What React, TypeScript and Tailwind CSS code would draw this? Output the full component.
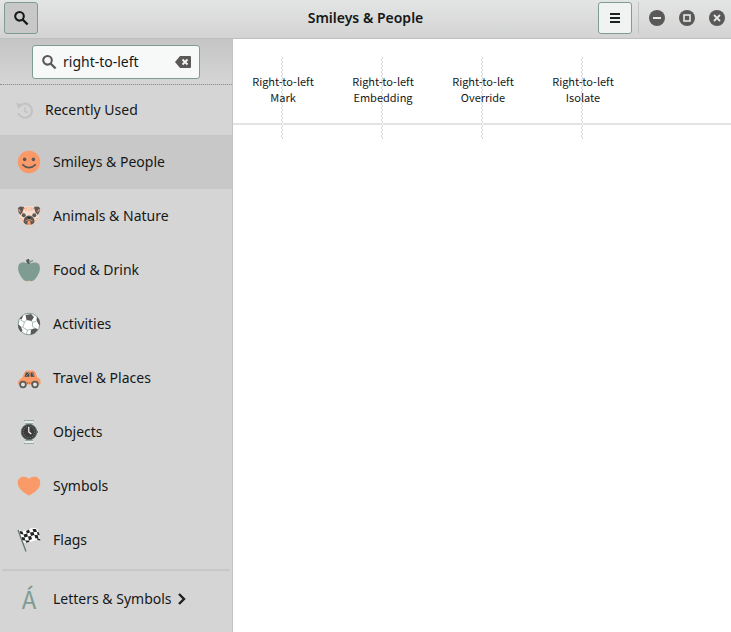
import type { ReactNode } from "react";

function SearchIcon({ className }: { className: string }) {
  return (
    <svg viewBox="0 0 16 16" className={className} fill="none" stroke="currentColor" aria-hidden="true">
      <circle cx="6.5" cy="6.3" r="4.3" strokeWidth="2.1" />
      <path d="M9.6 9.5l5 5" strokeWidth="2.4" />
    </svg>
  );
}

const icons: Record<string, ReactNode> = {
  smiley: (
    <>
      <circle cx="12" cy="12" r="11.2" fill="#fb9a69" />
      <ellipse cx="7.6" cy="9.3" rx="1.7" ry="1.9" fill="#5b5957" />
      <ellipse cx="16.4" cy="9.3" rx="1.7" ry="1.9" fill="#5b5957" />
      <path d="M5.2 14.3q6.8 6.600 13.600 0" stroke="#5b5957" strokeWidth="1.7" fill="none" />
    </>
  ),
  dog: (
    <>
      <path d="M4 3.500q8-3 16 0l2 8q0 8-10 10.500Q2 19.500 2 11.500z" fill="#f6ddcf" />
      <path
        d="M7 4l3 3M17 4l-3 3M12 3v5M3.500 14l3 4.500M20.500 14l-3 4.500M9 3.500l1.500 2M15 3.500l-1.500 2M5 9l2-1M19 9l-2-1"
        stroke="#fb9a69"
        strokeWidth="1.1"
        strokeDasharray="1.400 .8"
      />
      <path d="M7 3Q2 1.500 .8 4.500q.2 4 2.400 6.500Q6 8.500 7 3zM17 3q5-1.500 6.200 1.500-.2 4-2.400 6.500Q18 8.500 17 3z" fill="#5b5957" />
      <path d="M1.500 5l2 3M22.500 5l-2 3" stroke="#fb9a69" strokeWidth="1.200" />
      <circle cx="6.700" cy="11.300" r="2" fill="#5b5957" />
      <circle cx="17.300" cy="11.300" r="2" fill="#5b5957" />
      <path d="M12 11.500q3.500 0 5 3.500 1.500 4-2 5.500H9Q5.500 19 7 15 8.500 11.500 12 11.500z" fill="#5b5957" />
      <path d="M8.500 17q3.500-3 7 0" stroke="#d98d69" fill="none" />
      <path d="M10 13h4l-2 2z" fill="#1d2021" />
      <ellipse cx="12" cy="19" rx="1.600" ry="2.400" fill="#fb9a69" />
    </>
  ),
  apple: (
    <>
      <path d="M12 6Q5 2.300 2 6.300C-1 12 4 20 8 22.800q2 .8 4 0 2 .8 4 0C20 20 25 12 22 6.300 19 2.300 12 6 12 6z" fill="#7f9c93" />
      <path d="M10.800 6L8.800 2.500q1.500-2.300 3.500-1.300L12.800 6z" fill="#5b5957" />
      <path d="M12.500 5q1-2 3.500-2.500" stroke="#7f9c93" strokeWidth="1.400" fill="none" />
      <path d="M22 5.500v1.500M11 22.800h2" stroke="#fb9a69" strokeWidth=".8" />
    </>
  ),
  ball: (
    <>
      <circle cx="12" cy="12" r="10.800" fill="#fff" stroke="#7f9c93" strokeWidth="1" />
      <path
        d="M8.500 3l5.500-1 3 3-2.500 4-5-1zM14 17.500l4.500-1.500 2.500 1.500-3.500 4-4 1.200zM1 12.500l2.500 1.500 2 4.500-1.500 1.500Q1 17 1 12.500zM20 4.500q3.500 4 3 9l-2-2-1.500-3.500zM2.500 7l2.500-3 1 .5-1.500 3z"
        fill="#5b5957"
      />
      <path
        d="M9.500 8L7.500 10l-4-2M7.500 10l-1.500 5-2 .5M6 15.500l4.500 2.500 3.500-.5M14.500 9l1 1.500 4-1.500M15.500 10.500l0 4 3 2M10.500 18l-1 4"
        stroke="#a3b8b1"
        strokeWidth=".9"
        fill="none"
      />
    </>
  ),
  car: (
    <>
      <path d="M1 16q1-3 4-4l2-4.500Q8 4.500 10 4.500h6q1.800 0 2.700 2.500l1.500 4.500q3.300 1 3.300 3.500v3.500H1z" fill="#fb9a69" />
      <path d="M7.500 10.700L9 6.500h3.400v4.200zM13.600 6.500h2.700l1.300 4.200h-4z" fill="#45484a" />
      <path d="M9 10l3-3M15 7l2 3" stroke="#a6aaa8" strokeWidth=".7" />
      <path d="M10 17h5" stroke="#5b5957" strokeDasharray="1 1" />
      {[6, 18].map((x) => (
        <g key={x}>
          <circle cx={x} cy="18.500" r="3.700" fill="#5b5957" />
          <circle cx={x} cy="18.500" r="2" fill="#dfe3e2" />
        </g>
      ))}
    </>
  ),
  watch: (
    <>
      <path d="M7 .8h10M8 3.200h8M8 20.800h8M7 23.200h10" stroke="#7f9c93" strokeWidth="1" />
      <path d="M7.500 2h9M7.500 22h9" stroke="#f3f6f5" strokeWidth="1.500" />
      <circle cx="12" cy="12" r="7.700" fill="#3c3c3c" stroke="#5b6b66" strokeWidth="1" />
      <circle cx="12" cy="12" r="5.700" fill="none" stroke="#858987" strokeDasharray="1 1.300" />
      <path d="M11.800 7v5l2.500 2" stroke="#fff" strokeWidth="1.200" fill="none" />
      <path d="M20.300 11v2" stroke="#5b5957" />
    </>
  ),
  heart: (
    <path d="M12 21.500C8 19.500.5 15 .7 8.500.8 2 9 1 12 5 15 1 23.200 2 23.300 8.500 23.500 15 16 19.500 12 21.500z" fill="#fb9a69" />
  ),
  flag: (
    <>
      <path d="M1.500 2q5 2 10-.5t9-.500l3 11.500q-4-1.500-9 1t-9 .5z" fill="#fff" />
      <path
        d="M2.500 3l3 .5 1 3-3-.5zM9 3l3-1.500 1 3-3 1zM15.500 1h3.500l1 3h-3.500zM6.500 6.500l3.500-1 1 3-3.500 1zM13 4.500L16.500 4l1 3-3.500 1zM20 4l1.800.3.8 3-2-.3zM4.500 9l3 .5 1 3-3.200-.3zM11 8.500L14 8l1 3-3 1.500zM17.500 7l3.100 0 1 3.500-3.300-.3zM8.500 12.500L12 12.300l.4 1.600-3.400.8zM20 10.500l3 .5.500 1.500-3-.5z"
        fill="#202223"
      />
      <path d="M1 2l8 21.500" stroke="#60746d" strokeWidth="1.300" />
    </>
  ),
};

const categories = [
  ["Smileys & People", "smiley"],
  ["Animals & Nature", "dog"],
  ["Food & Drink", "apple"],
  ["Activities", "ball"],
  ["Travel & Places", "car"],
  ["Objects", "watch"],
  ["Symbols", "heart"],
  ["Flags", "flag"],
];

const results = [
  ["Right-to-left", "Mark"],
  ["Right-to-left", "Embedding"],
  ["Right-to-left", "Override"],
  ["Right-to-left", "Isolate"],
];

const windowControls = [
  { label: "Minimize", shape: <path d="M4 8h8" strokeWidth="2" /> },
  { label: "Maximize", shape: <rect x="5" y="5" width="6" height="6" strokeWidth="1.600" /> },
  { label: "Close", shape: <path d="M5 5l6 6M11 5l-6 6" strokeWidth="1.800" /> },
];

export default function App() {
  return (
    <div className="flex min-h-screen flex-col bg-white font-['Noto_Sans',sans-serif] text-sm text-[#151818]">
      <header className="grid h-[39px] grid-cols-[1fr_auto_1fr] items-start border-b border-[#bcc1bf] bg-linear-to-b from-[#e3e5e4] to-[#d3d3d3]">
        <div className="pt-0.5 pl-1">
          <button
            type="button"
            aria-label="Search"
            className="flex h-8 w-[34px] items-center justify-center rounded-[3px] border border-[#7f9c93] bg-[#c8c8c8]"
          >
            <SearchIcon className="size-4" />
          </button>
        </div>
        <h1 className="pt-2 font-semibold">Smileys &amp; People</h1>
        <div className="flex items-center justify-end pt-0.5 pr-1.5">
          <button
            type="button"
            aria-label="Menu"
            className="flex h-8 w-[34px] items-center justify-center rounded-[3px] border border-[#7f9c93] bg-[#f1f3f2]"
          >
            <svg viewBox="0 0 16 16" className="size-4" aria-hidden="true">
              <path d="M3 4h10M3 8h10M3 12h10" stroke="#1d2021" strokeWidth="2" />
            </svg>
          </button>
          <div className="ml-1.5 h-8 w-px bg-[#c4c4c4]" />
          <div className="ml-2.5 flex gap-3.5">
            {windowControls.map(({ label, shape }) => (
              <button key={label} type="button" aria-label={label} className="rounded-full">
                <svg viewBox="0 0 16 16" className="size-4" fill="none" stroke="#e6e8e7" aria-hidden="true">
                  <circle cx="8" cy="8" r="8" fill="#5b5957" stroke="none" />
                  {shape}
                </svg>
              </button>
            ))}
          </div>
        </div>
      </header>

      <div className="flex flex-1">
        <aside className="w-[233px] shrink-0 border-r border-[#c3c3c3] bg-[#d5d5d5]">
          <div className="flex h-[46px] justify-center border-b border-dotted border-[#7f9c93] bg-linear-to-b from-[#c5c5c5] to-[#d5d5d5] pt-1.5">
            <div className="flex h-[34px] w-[168px] items-center rounded-[3px] border border-[#7f9c93] bg-[#f7f8f8] px-2">
              <label htmlFor="character-search" aria-label="Search characters" className="shrink-0">
                <SearchIcon className="size-4 text-[#5b5957]" />
              </label>
              <input
                id="character-search"
                type="text"
                defaultValue="right-to-left"
                className="ml-1.5 w-full min-w-0 bg-transparent outline-none"
              />
              <button type="button" aria-label="Clear search" className="shrink-0">
                <svg viewBox="0 0 16 16" className="size-4" aria-hidden="true">
                  <path d="M5 2h10q1 0 1 1v10q0 1-1 1H5L0 8z" fill="#5b5957" />
                  <path d="M7.500 5.500l5 5M12.500 5.500l-5 5" stroke="#f7f8f8" strokeWidth="1.800" />
                </svg>
              </button>
            </div>
          </div>

          <nav>
            <button type="button" className="flex h-[50px] w-full items-center gap-3 pl-4">
              <svg viewBox="0 0 17 17" className="size-[17px]" fill="none" stroke="#c3c3c3" aria-hidden="true">
                <path d="M3 5a7 7 0 1 1-.7 6" strokeWidth="2.200" />
                <path d="M0 1l6 1-3.500 5z" fill="#c3c3c3" stroke="none" />
                <path d="M9 5v4.500l3 1" strokeWidth="1.600" />
              </svg>
              Recently Used
            </button>
            {categories.map(([label, icon], index) => (
              <button
                key={label}
                type="button"
                className={
                  index === 0
                    ? "flex h-[54px] w-full items-center gap-3 bg-[#c8c8c8] pl-[17px]"
                    : "flex h-[54px] w-full items-center gap-3 pl-[17px]"
                }
              >
                <svg viewBox="0 0 24 24" className="size-6" aria-hidden="true">
                  {icons[icon]}
                </svg>
                {label}
              </button>
            ))}
            <hr className="mx-0.5 mt-0.5 border-t-2 border-[#c8c8c8]" />
            <button type="button" className="flex h-14 w-full items-center gap-3 pl-[17px]">
              <span className="w-6 text-center font-['Noto_Sans_CJK_SC',sans-serif] text-2xl text-[#7f9c93]">Á</span>
              <span className="flex items-center gap-1">
                Letters &amp; Symbols
                <svg viewBox="0 0 12 16" className="h-4 w-3" fill="none" aria-hidden="true">
                  <path d="M3 3l5 5-5 5" stroke="#1d2021" strokeWidth="2.400" />
                </svg>
              </span>
            </button>
          </nav>
        </aside>

        <main className="flex-1">
          <ul className="flex h-[86px] border-b-2 border-[#e3e3e3] font-['Noto_Sans_CJK_SC',sans-serif] text-[11px] leading-4">
            {results.map(([first, second]) => (
              <li key={second} className="relative w-[100px]">
                <div className="absolute top-[18px] left-12 h-[82px] w-0.5 bg-[repeating-conic-gradient(#d6d6d6_0_25%,#fff_0_50%)] bg-[length:2px_4px]" />
                <button type="button" className="relative h-full w-full pt-4">
                  {first}
                  <br />
                  {second}
                </button>
              </li>
            ))}
          </ul>
        </main>
      </div>
    </div>
  );
}
